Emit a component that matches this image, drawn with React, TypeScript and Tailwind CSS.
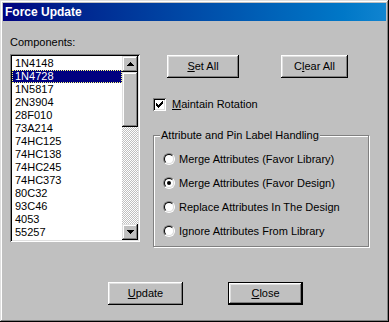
import React from "react"

const items = [
  "1N4148", "1N4728", "1N5817", "2N3904", "28F010", "73A214", "74HC125",
  "74HC138", "74HC245", "74HC373", "80C32", "93C46", "4053", "55257",
]

const options = [
  "Merge Attributes (Favor Library)",
  "Merge Attributes (Favor Design)",
  "Replace Attributes In The Design",
  "Ignore Attributes From Library",
]

const btn = "h-[23px] flex items-center justify-center bg-[#c0c0c0] shadow-[inset_-1px_-1px_#000,inset_1px_1px_#fff,inset_-2px_-2px_#808080,inset_2px_2px_#dfdfdf]"
const scrollBtn = "h-[16px] w-[16px] flex items-center justify-center bg-[#c0c0c0] shadow-[inset_-1px_-1px_#000,inset_1px_1px_#dfdfdf,inset_-2px_-2px_#808080,inset_2px_2px_#fff]"

function Arrow({ down }: { down?: boolean }) {
  const rows = [
    [3, 1],
    [2, 3],
    [1, 5],
    [0, 7],
  ]
  return (
    <svg width="7" height="4" viewBox="0 0 7 4" shapeRendering="crispEdges">
      {rows.map(([x, w], i) => (
        <rect key={i} x={x} y={down ? 3 - i : i} width={w} height={1} fill="#000" />
      ))}
    </svg>
  )
}

function Check() {
  // win98 style check, pixel by pixel
  const px = [
    [6, 0], [5, 1], [6, 1], [0, 2], [4, 2], [5, 2], [6, 2],
    [0, 3], [1, 3], [3, 3], [4, 3], [5, 3],
    [0, 4], [1, 4], [2, 4], [3, 4], [4, 4],
    [1, 5], [2, 5], [3, 5], [2, 6],
  ]
  return (
    <svg width="7" height="7" viewBox="0 0 7 7" shapeRendering="crispEdges">
      {px.map(([x, y], i) => (
        <rect key={i} x={x} y={y} width={1} height={1} fill="#000" />
      ))}
    </svg>
  )
}

function Radio({ on }: { on?: boolean }) {
  return (
    <div className="w-[12px] h-[12px] rounded-full border border-t-[#808080] border-l-[#808080] border-r-white border-b-white shrink-0">
      <div className="w-full h-full rounded-full border border-t-black border-l-black border-r-[#dfdfdf] border-b-[#dfdfdf] bg-white flex items-center justify-center">
        {on && <div className="w-[4px] h-[4px] rounded-full bg-black" />}
      </div>
    </div>
  )
}

export default function App() {
  return (
    <div className="w-[389px] h-[322px] bg-[#c0c0c0] p-[3px] flex flex-col text-[11px] text-black font-[family-name:'Liberation_Sans',Arial,sans-serif] shadow-[inset_-1px_-1px_#000,inset_1px_1px_#dfdfdf,inset_-2px_-2px_#808080,inset_2px_2px_#fff]">
      <div className="h-[18px] shrink-0 flex items-center pl-[2px] bg-gradient-to-r from-[#000080] to-[#1084d0]">
        <span className="text-white font-bold text-[12px] leading-none">Force Update</span>
      </div>

      <div className="flex pl-[7px]">
        <div className="flex flex-col w-[130px]">
          <div className="mt-[15px] h-[13px] leading-[13px]">Components:</div>
          <div className="mt-[5px] h-[188px] p-[2px] flex shadow-[inset_1px_1px_#808080,inset_-1px_-1px_#fff,inset_2px_2px_#000,inset_-2px_-2px_#dfdfdf]">
            <div className="flex-1 bg-white pt-[1px]">
              {items.map((it, i) => (
                <div
                  key={it}
                  className={
                    i === 1
                      ? "h-[13px] leading-[13px] pl-[3px] bg-[#000080] text-white outline-1 outline-dotted outline-[#ffff7f] -outline-offset-1"
                      : "h-[13px] leading-[13px] pl-[3px]"
                  }
                >
                  {it}
                </div>
              ))}
            </div>
            <div className="w-[16px] flex flex-col">
              <div className={scrollBtn}><Arrow /></div>
              <div className="flex-1 flex flex-col bg-[repeating-conic-gradient(#c0c0c0_0%_25%,#fff_0%_50%)] bg-[length:2px_2px]">
                <div className="h-[55px] w-[16px] bg-[#c0c0c0] shadow-[inset_-1px_-1px_#000,inset_1px_1px_#dfdfdf,inset_-2px_-2px_#808080,inset_2px_2px_#fff]" />
              </div>
              <div className={scrollBtn}><Arrow down /></div>
            </div>
          </div>
        </div>

        <div className="ml-[13px] w-[216px] flex flex-col">
          <div className="mt-[34px] flex">
            <button className={btn + " ml-[14px] w-[72px]"}>
              <span><span className="underline">S</span>et All</span>
            </button>
            <button className={btn + " ml-[42px] w-[67px]"}>
              <span>C<span className="underline">l</span>ear All</span>
            </button>
          </div>

          <div className="mt-[20px] flex items-center h-[13px]">
            <div className="w-[13px] h-[13px] p-[2px] shrink-0 shadow-[inset_1px_1px_#808080,inset_-1px_-1px_#fff,inset_2px_2px_#000,inset_-2px_-2px_#dfdfdf]">
              <div className="w-[9px] h-[9px] bg-white flex items-center justify-center">
                <Check />
              </div>
            </div>
            <span className="ml-[6px] leading-[13px]">
              <span className="underline">M</span>aintain Rotation
            </span>
          </div>

          <div className="mt-[24px] relative h-[112px] border border-[#808080] shadow-[1px_1px_0_#fff,inset_1px_1px_0_#fff] pt-[17px] pl-[9px] flex flex-col gap-[12px]">
            <span className="absolute left-[6px] top-[-7px] px-[1px] h-[13px] leading-[13px] bg-[#c0c0c0]">
              Attribute and Pin Label Handling
            </span>
            {options.map((o, i) => (
              <div key={o} className="flex items-center h-[12px]">
                <Radio on={i === 1} />
                <span className="ml-[4px] leading-[13px] whitespace-nowrap">{o}</span>
              </div>
            ))}
          </div>
        </div>
      </div>

      <div className="flex mt-[35px] pl-[105px]">
        <button className={btn + " w-[75px]"}>
          <span><span className="underline">U</span>pdate</span>
        </button>
        <button className="ml-[45px] w-[75px] h-[23px] flex items-center justify-center bg-[#c0c0c0] shadow-[inset_0_0_0_1px_#000,inset_-2px_-2px_#000,inset_2px_2px_#fff,inset_-3px_-3px_#808080,inset_3px_3px_#dfdfdf]">
          <span><span className="underline">C</span>lose</span>
        </button>
      </div>
    </div>
  )
}
